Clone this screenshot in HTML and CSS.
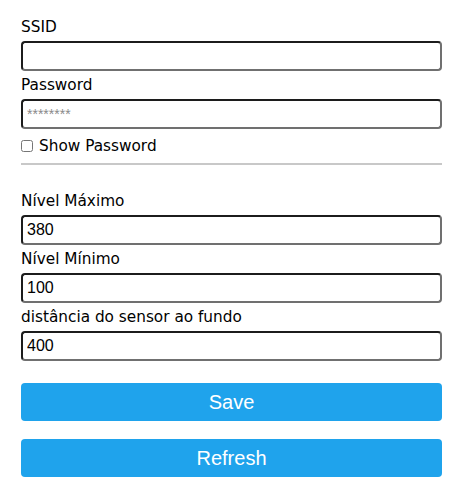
FILE: index.html
```html
<!DOCTYPE html>
<html>
<head>
<meta charset="utf-8">
<link rel="stylesheet" href="styles.css">
</head>
<body>
<form class="form">
  <label class="lbl" for="s">SSID</label>
  <input class="inp" id="s" type="text">
  <label class="lbl" for="p">Password</label>
  <input class="inp" id="p" type="password" placeholder="********">
  <div class="show"><input class="chk" type="checkbox" id="c"><label for="c">Show Password</label></div>
  <hr class="sep">
  <label class="lbl" for="a">Nível Máximo</label>
  <input class="inp" id="a" type="text" value="380">
  <label class="lbl" for="b">Nível Mínimo</label>
  <input class="inp" id="b" type="text" value="100">
  <label class="lbl" for="d">distância do sensor ao fundo</label>
  <input class="inp" id="d" type="text" value="400">
  <button class="btn save" type="button">Save</button>
  <button class="btn refresh" type="button">Refresh</button>
</form>
</body>
</html>
```
FILE: styles.css
```css
html, body { margin: 0; padding: 0; background: #fff; }
body { font-family: "DejaVu Sans", Verdana, sans-serif; color: #000; }
.form { display: flex; flex-direction: column; padding: 13px 21px 0 21px; }
.lbl { display: block; height: 28px; line-height: 28px; font-size: 15.3px; }
.inp {
  box-sizing: border-box; width: 100%; height: 30px; margin: 0;
  border: 2px solid; border-color: #1c1c1c #707070 #707070 #1c1c1c;
  border-radius: 4px; padding: 0 4px;
  font-family: "Liberation Sans", Arial, sans-serif; font-size: 16px; color: #000;
  background: #fff; outline: none;
}
.inp::placeholder { color: #8a8a8a; font-size: 14px; }
.show { display: flex; align-items: center; height: 32px; font-size: 15.3px; margin-top: 1px; }
.chk { width: 12px; height: 12px; margin: 0 6px 0 0; }
.sep { margin: 1px 0 0 0; height: 0; border: 0; border-top: 2px solid #c8c8c8; }
.sep + .lbl { margin-top: 22px; }
.btn {
  box-sizing: border-box; width: 100%; height: 38px; border: 0; border-radius: 4px;
  background: #1fa3ec; color: #fff; font-family: "Liberation Sans", Arial, sans-serif;
  font-size: 20px; padding: 0;
}
.save { margin-top: 22px; }
.refresh { margin-top: 18px; }
```
